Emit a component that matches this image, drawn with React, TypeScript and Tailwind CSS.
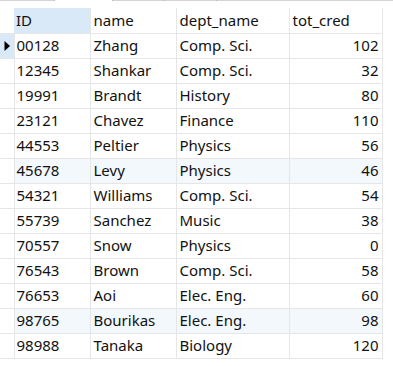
const rows: [string, string, string, number][] = [
  ['00128', 'Zhang', 'Comp. Sci.', 102],
  ['12345', 'Shankar', 'Comp. Sci.', 32],
  ['19991', 'Brandt', 'History', 80],
  ['23121', 'Chavez', 'Finance', 110],
  ['44553', 'Peltier', 'Physics', 56],
  ['45678', 'Levy', 'Physics', 46],
  ['54321', 'Williams', 'Comp. Sci.', 54],
  ['55739', 'Sanchez', 'Music', 38],
  ['70557', 'Snow', 'Physics', 0],
  ['76543', 'Brown', 'Comp. Sci.', 58],
  ['76653', 'Aoi', 'Elec. Eng.', 60],
  ['98765', 'Bourikas', 'Elec. Eng.', 98],
  ['98988', 'Tanaka', 'Biology', 120],
];

const HOVER_ROWS = [5, 11];

function TabStrip() {
  return (
    <div className="flex h-px">
      <div className="w-[55px] bg-[#d4d4d4] border-r border-[#b8b8b8]" />
      <div className="w-[57px]" />
      <div className="w-[52px] bg-[#d4d4d4] border-l border-[#b8b8b8]" />
      <div className="w-[52px] bg-[#d4d4d4] border-l border-[#b8b8b8]" />
      <div className="flex-1 bg-[#d4d4d4] border-l border-[#b8b8b8]" />
    </div>
  );
}

export default function App() {
  const cell = 'h-[25px] border-r border-b border-[#e6e6e6] px-[2px] whitespace-nowrap';
  return (
    <div
      className="w-[393px] h-[366px] bg-white text-[15px] text-[#111] overflow-hidden"
      style={{ fontFamily: '"Noto Sans", "Open Sans", sans-serif' }}
    >
      <TabStrip />
      <table className="mt-[7px] border-collapse table-fixed w-[382px] leading-none">
        <colgroup>
          <col className="w-[14px]" />
          <col className="w-[76px]" />
          <col className="w-[86px]" />
          <col className="w-[113px]" />
          <col className="w-[93px]" />
        </colgroup>
        <thead>
          <tr>
            <th className="h-[25px] border-b border-[#e6e6e6] p-0" />
            <th className={`${cell} font-normal text-left bg-[#d9e9f7]`}>ID</th>
            <th className={`${cell} font-normal text-left pl-[3px]`}>name</th>
            <th className={`${cell} font-normal text-left pl-[3px]`}>dept_name</th>
            <th className={`${cell} font-normal text-left pl-[3px]`}>tot_cred</th>
          </tr>
        </thead>
        <tbody>
          {rows.map(([id, name, dept, cred], i) => {
            const bg = HOVER_ROWS.includes(i) ? 'bg-[#f3f8fd]' : '';
            return (
              <tr key={id}>
                <td className={`h-[25px] border-r border-b border-[#e6e6e6] p-0 ${i === 0 ? 'bg-[#d9e9f7]' : ''}`}>
                  {i === 0 && (
                    <svg width="13" height="24" viewBox="0 0 13 24" className="block">
                      <path d="M4.5 7 L10 12 L4.5 17 Z" fill="#000" />
                    </svg>
                  )}
                </td>
                <td className={`${cell} ${bg}`}>{id}</td>
                <td className={`${cell} ${bg} pl-[3px]`}>{name}</td>
                <td className={`${cell} ${bg} pl-[3px]`}>{dept}</td>
                <td className={`${cell} ${bg} text-right pr-[3px]`}>{cred}</td>
              </tr>
            );
          })}
        </tbody>
      </table>
    </div>
  );
}
